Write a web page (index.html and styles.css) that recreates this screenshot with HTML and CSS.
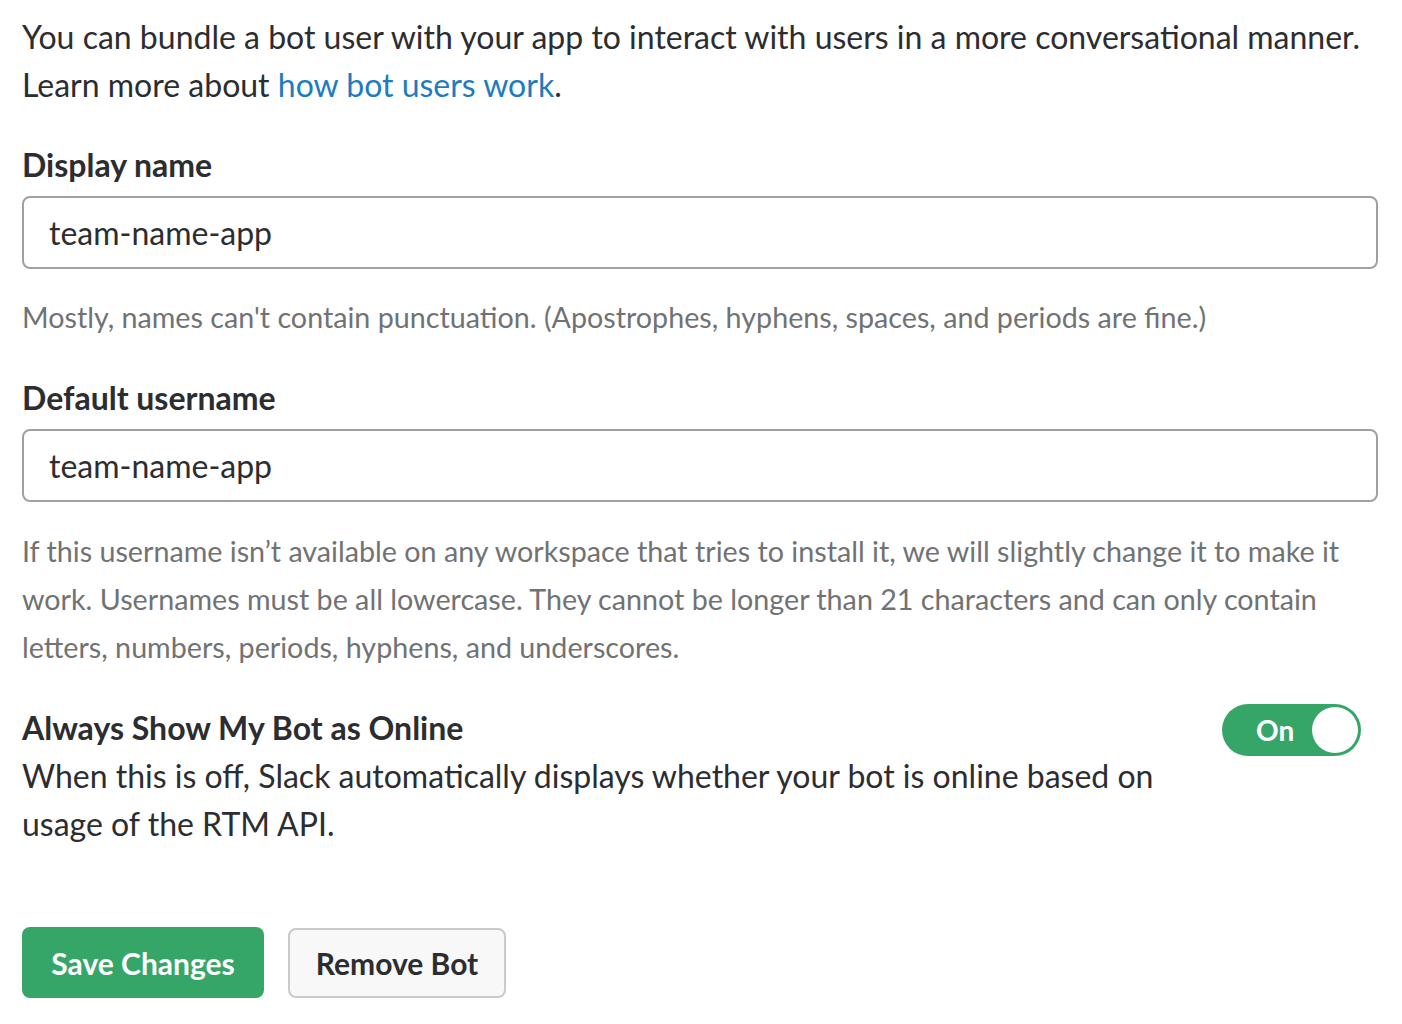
FILE: index.html
```html
<!DOCTYPE html>
<html>
<head>
<meta charset="utf-8">
<link rel="stylesheet" href="styles.css">
</head>
<body>
<div class="page">
  <p class="intro">You can bundle a bot user with your app to interact with users in a more conversational manner. Learn more about <a href="#" class="link">how bot users work</a>.</p>

  <div class="field">
    <label class="label">Display name</label>
    <div class="input">team-name-app</div>
    <p class="hint">Mostly, names can't contain punctuation. (Apostrophes, hyphens, spaces, and periods are fine.)</p>
  </div>

  <div class="field">
    <label class="label">Default username</label>
    <div class="input">team-name-app</div>
    <p class="hint">If this username isn’t available on any workspace that tries to install it, we will slightly change it to make it work. Usernames must be all lowercase. They cannot be longer than 21 characters and can only contain letters, numbers, periods, hyphens, and underscores.</p>
  </div>

  <div class="toggle-row">
    <div class="toggle-text">
      <div class="toggle-title">Always Show My Bot as Online</div>
      <p class="toggle-desc">When this is off, Slack automatically displays whether your bot is online based on usage of the RTM API.</p>
    </div>
    <div class="toggle">
      <span class="toggle-label">On</span>
      <span class="knob"></span>
    </div>
  </div>

  <div class="actions">
    <button class="btn btn-primary">Save Changes</button>
    <button class="btn btn-secondary">Remove Bot</button>
  </div>
</div>
</body>
</html>
```
FILE: styles.css
```css
* { box-sizing: border-box; }
html, body { margin: 0; padding: 0; background: #fff; }
body {
  font-family: Lato, "Noto Sans", sans-serif;
  color: #2c2d30;
}
.page {
  padding: 13px 25px 0 22px;
  width: 1402px;
}
.intro {
  margin: 0;
  font-size: 32px;
  line-height: 48px;
  width: 1350px;
}
.link { color: #1d7cc0; text-decoration: none; }
.field { margin-top: 38px; }
.field + .field { margin-top: 39px; }
.label {
  display: block;
  font-size: 32px;
  font-weight: 700;
  line-height: 36px;
  margin-bottom: 13px;
}
.input {
  width: 1356px;
  height: 73px;
  border: 2px solid #a0a0a2;
  border-radius: 8px;
  padding: 0 25px;
  font-size: 32px;
  line-height: 69px;
  color: #2c2d30;
}
.hint {
  margin: 0;
  margin-top: 24px;
  font-size: 28.7px;
  line-height: 48px;
  color: #717274;
}
.field + .field .hint { margin-top: 25px; }
.toggle-row {
  display: flex;
  justify-content: space-between;
  align-items: flex-start;
  margin-top: 33px;
  width: 1339px;
}
.toggle-text { width: 1160px; }
.toggle-title {
  font-size: 32px;
  font-weight: 700;
  line-height: 48px;
}
.toggle-desc {
  margin: 0;
  font-size: 32px;
  line-height: 48px;
}
.toggle {
  width: 139px;
  height: 52px;
  border-radius: 26px;
  background: #36a668;
  display: flex;
  align-items: center;
  justify-content: space-between;
  padding: 0 3px 0 34px;
  flex-shrink: 0;
}
.toggle-label {
  color: #fff;
  font-size: 28px;
  font-weight: 700;
}
.knob {
  width: 46px;
  height: 46px;
  border-radius: 50%;
  background: #fff;
}
.actions {
  display: flex;
  align-items: center;
  gap: 24px;
  margin-top: 79px;
}
.btn {
  font-family: Lato, "Noto Sans", sans-serif;
  font-size: 30px;
  font-weight: 700;
  border-radius: 8px;
  padding: 0;
  white-space: nowrap;
  cursor: pointer;
}
.btn-primary {
  background: #36a668;
  color: #fff;
  border: none;
  width: 242px;
  height: 71px;
}
.btn-secondary {
  background: #f8f8f8;
  color: #2c2d30;
  border: 2px solid #c9cacc;
  width: 218px;
  height: 70px;
}
```
